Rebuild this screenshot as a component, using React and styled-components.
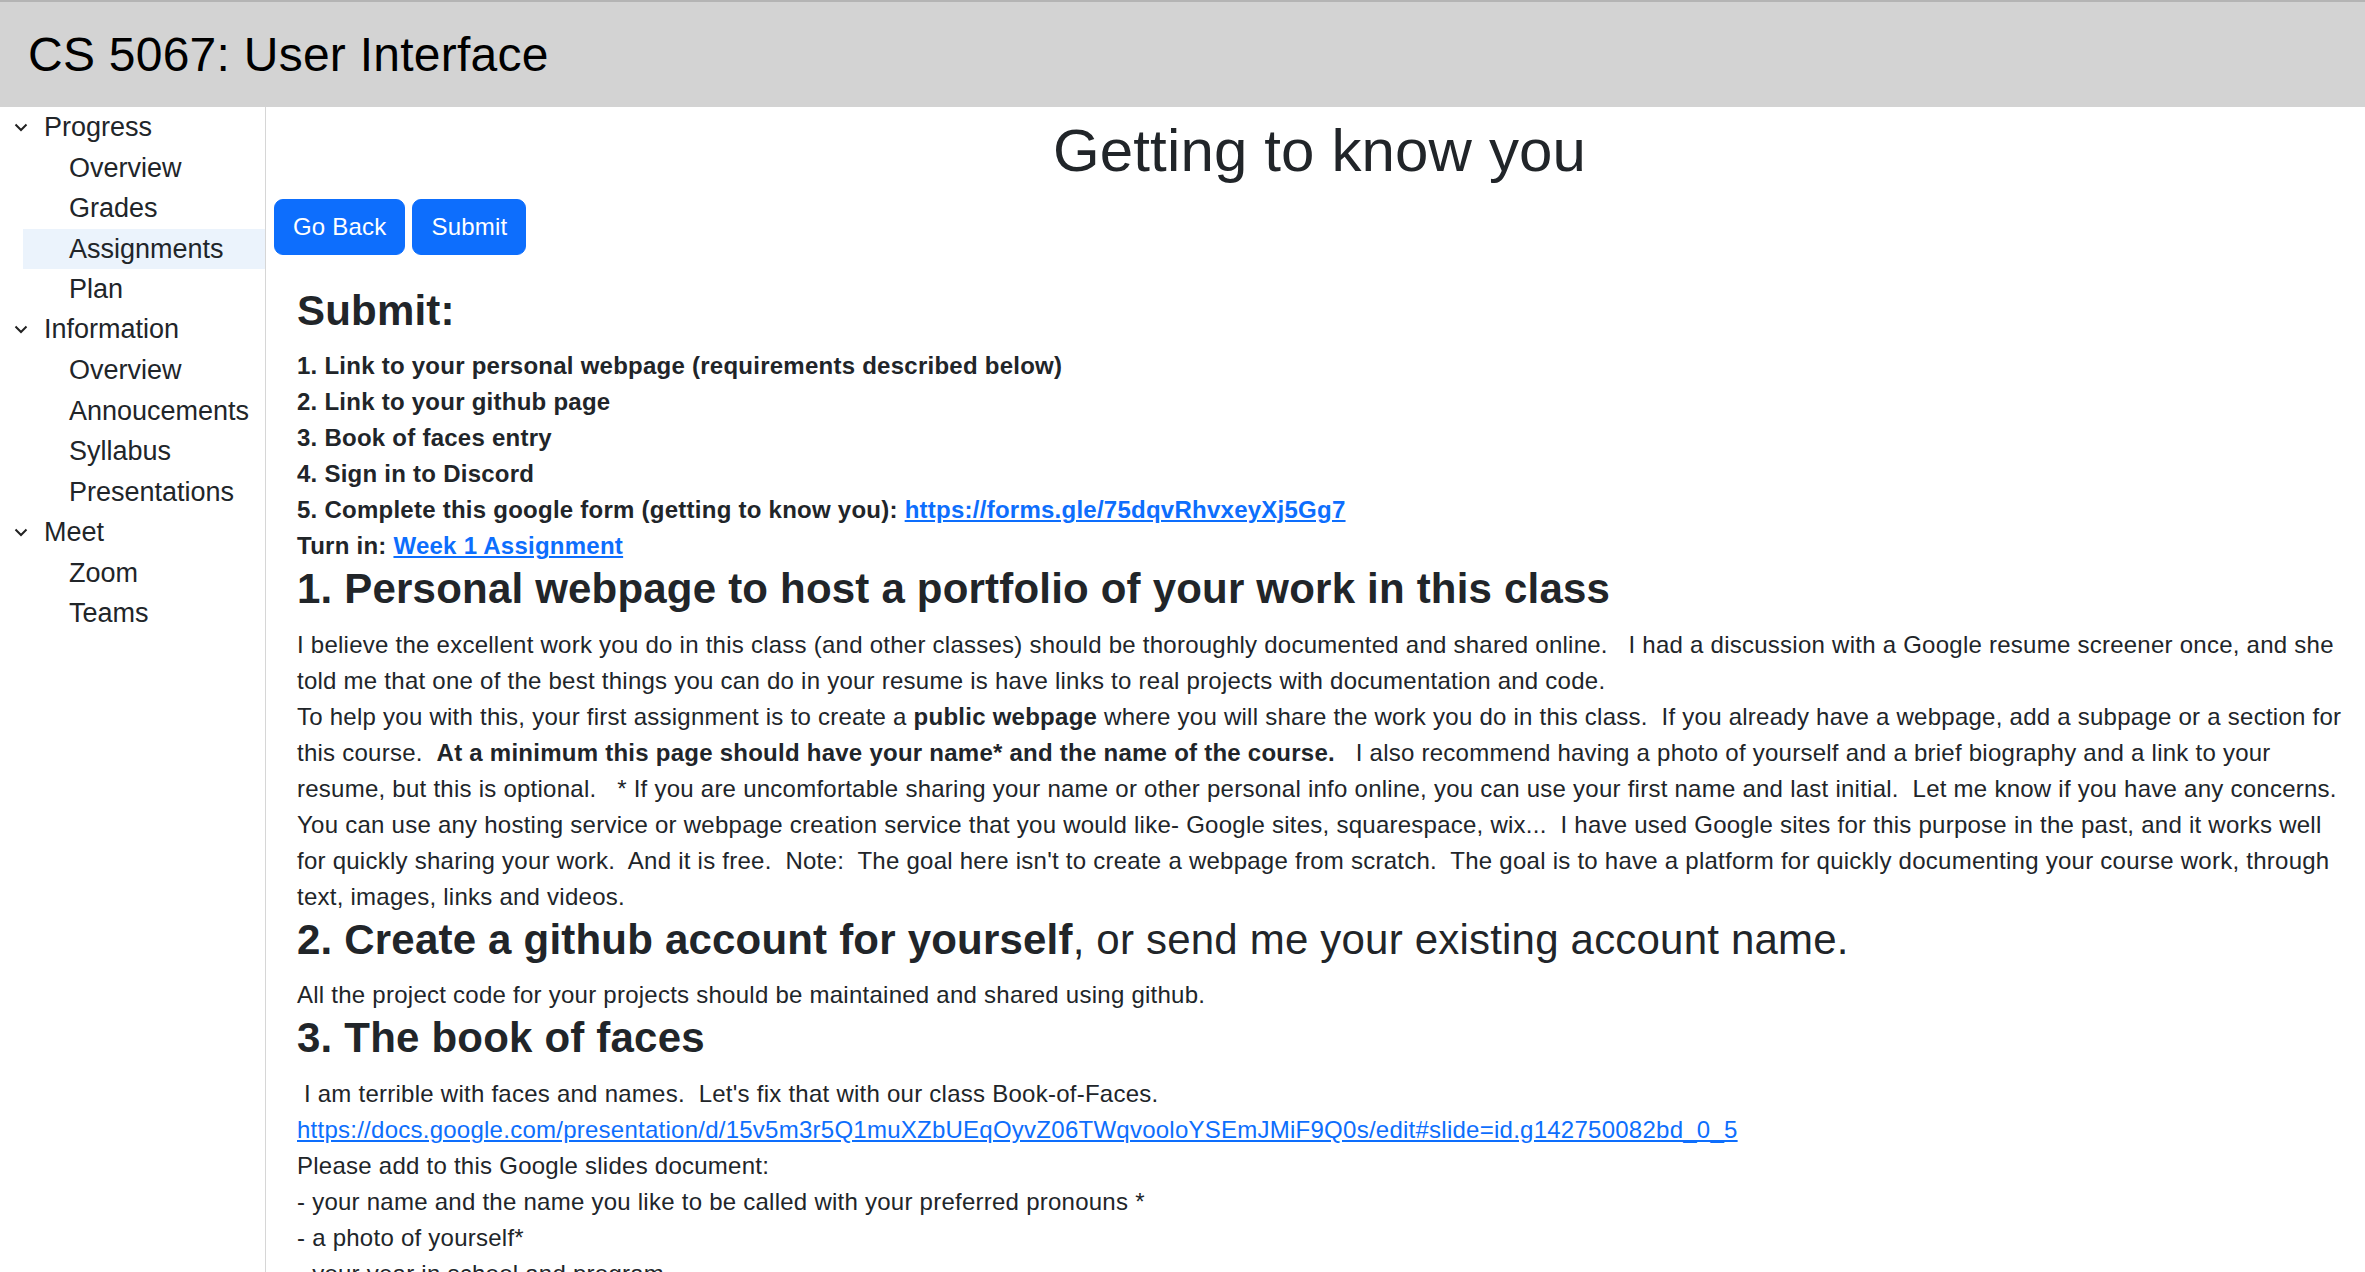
import React from "react";
import styled, { createGlobalStyle } from "styled-components";

//STYLES
const GlobalStyle = createGlobalStyle`
  html, body {
    margin: 0;
    padding: 0;
    overflow: hidden;
  }
  body {
    font-family: "Liberation Sans", Arial, sans-serif;
    color: #212529;
    background: #fff;
  }
`;

const Page = styled.div`
  display: flex;
  flex-direction: column;
  height: 100vh;
  overflow: hidden;
`;

const Header = styled.header`
  flex: none;
  height: 107px;
  box-sizing: border-box;
  background: #d3d3d3;
  border-top: 2px solid #b4b4b4;
  padding-left: 28px;
  display: flex;
  align-items: center;
`;

const HeaderTitle = styled.h1`
  margin: 0;
  font-size: 48px;
  font-weight: 400;
  letter-spacing: 0.25px;
  color: #000;
  line-height: 1.2;
`;

const Body = styled.div`
  flex: 1;
  display: flex;
  min-height: 0;
`;

const Sidebar = styled.nav`
  flex: none;
  width: 265px;
  border-right: 1px solid #d6d6d6;
`;

const NavGroup = styled.div`
  display: flex;
  flex-direction: column;
`;

const NavHeading = styled.div`
  display: flex;
  align-items: center;
  height: 40.5px;
  font-size: 27px;
  padding-left: 14px;
  gap: 16px;
`;

const NavItem = styled.div`
  height: 40.5px;
  line-height: 40.5px;
  font-size: 27px;
  margin-left: 23px;
  padding-left: 46px;
  background: ${(p) => (p.$active ? "#ebf3fc" : "transparent")};
`;

const Main = styled.main`
  flex: 1;
  padding-left: 8px;
  min-width: 0;
`;

const PageTitle = styled.h1`
  margin: 8px 0 12px;
  font-size: 60px;
  font-weight: 400;
  letter-spacing: 0.15px;
  line-height: 1.2;
  text-align: center;
`;

const ButtonRow = styled.div`
  display: flex;
  gap: 7px;
`;

const Button = styled.button`
  font-family: inherit;
  font-size: 24px;
  line-height: 36px;
  letter-spacing: 0.2px;
  padding: 9px 18px;
  color: #fff;
  background: #0d6efd;
  border: 1px solid #0d6efd;
  border-radius: 9px;
`;

const Content = styled.section`
  padding: 31px 22px 0 23px;
  font-size: 24px;
  line-height: 36px;
  letter-spacing: 0.25px;
`;

const Heading = styled.h2`
  margin: 0 0 12px;
  font-size: 42px;
  line-height: 1.2;
  letter-spacing: 0.2px;
  font-weight: ${(p) => (p.$light ? 400 : 700)};
`;

const Line = styled.div`
  white-space: pre-wrap;
  font-weight: ${(p) => (p.$bold ? 700 : 400)};
`;

const Link = styled.a`
  color: #0d6efd;
  text-decoration: underline;
`;

const Chevron = () => (
  <svg width="14" height="9" viewBox="0 0 14 9" fill="none">
    <path d="M1.5 1.5 7 7l5.5-5.5" stroke="#222" strokeWidth="2" />
  </svg>
);

const nav = [
  { title: "Progress", items: ["Overview", "Grades", "Assignments", "Plan"] },
  {
    title: "Information",
    items: ["Overview", "Annoucements", "Syllabus", "Presentations"],
  },
  { title: "Meet", items: ["Zoom", "Teams"] },
];

const App = () => {
  return (
    <Page>
      <GlobalStyle />
      <Header>
        <HeaderTitle>CS 5067: User Interface</HeaderTitle>
      </Header>
      <Body>
        <Sidebar>
          {nav.map((group) => (
            <NavGroup key={group.title}>
              <NavHeading>
                <Chevron />
                {group.title}
              </NavHeading>
              {group.items.map((item) => (
                <NavItem key={item} $active={item === "Assignments"}>
                  {item}
                </NavItem>
              ))}
            </NavGroup>
          ))}
        </Sidebar>
        <Main>
          <PageTitle>Getting to know you</PageTitle>
          <ButtonRow>
            <Button>Go Back</Button>
            <Button>Submit</Button>
          </ButtonRow>
          <Content>
            <Heading>Submit:</Heading>
            <Line $bold>1. Link to your personal webpage (requirements described below)</Line>
            <Line $bold>2. Link to your github page</Line>
            <Line $bold>3. Book of faces entry</Line>
            <Line $bold>4. Sign in to Discord</Line>
            <Line $bold>
              {"5. Complete this google form (getting to know you): "}
              <Link href="#">https://forms.gle/75dqvRhvxeyXj5Gg7</Link>
            </Line>
            <Line $bold>
              {"Turn in: "}
              <Link href="#">Week 1 Assignment</Link>
            </Line>

            <Heading>1. Personal webpage to host a portfolio of your work in this class</Heading>
            <Line>
              {`I believe the excellent work you do in this class (and other classes) should be thoroughly documented and shared online.   I had a discussion with a Google resume screener once, and she told me that one of the best things you can do in your resume is have links to real projects with documentation and code.`}
            </Line>
            <Line>
              {"To help you with this, your first assignment is to create a "}
              <b>public webpage</b>
              {" where you will share the work you do in this class.  If you already have a webpage, add a subpage or a section for this course.  "}
              <b>At a minimum this page should have your name* and the name of the course.</b>
              {"   I also recommend having a photo of yourself and a brief biography and a link to your resume, but this is optional.   * If you are uncomfortable sharing your name or other personal info online, you can use your first name and last initial.  Let me know if you have any concerns."}
            </Line>
            <Line>
              {`You can use any hosting service or webpage creation service that you would like- Google sites, squarespace, wix...  I have used Google sites for this purpose in the past, and it works well for quickly sharing your work.  And it is free.  Note:  The goal here isn't to create a webpage from scratch.  The goal is to have a platform for quickly documenting your course work, through text, images, links and videos.`}
            </Line>

            <Heading $light>
              <b>2. Create a github account for yourself</b>, or send me your existing account name.
            </Heading>
            <Line>All the project code for your projects should be maintained and shared using github.</Line>

            <Heading>3. The book of faces</Heading>
            <Line>{" I am terrible with faces and names.  Let's fix that with our class Book-of-Faces."}</Line>
            <Line>
              <Link href="#">
                https://docs.google.com/presentation/d/15v5m3r5Q1muXZbUEqOyvZ06TWqvooloYSEmJMiF9Q0s/edit#slide=id.g142750082bd_0_5
              </Link>
            </Line>
            <Line>Please add to this Google slides document:</Line>
            <Line>- your name and the name you like to be called with your preferred pronouns *</Line>
            <Line>- a photo of yourself*</Line>
            <Line>- your year in school and program</Line>
            <Line>- something interesting about yourself</Line>
          </Content>
        </Main>
      </Body>
    </Page>
  );
};

export default App;
